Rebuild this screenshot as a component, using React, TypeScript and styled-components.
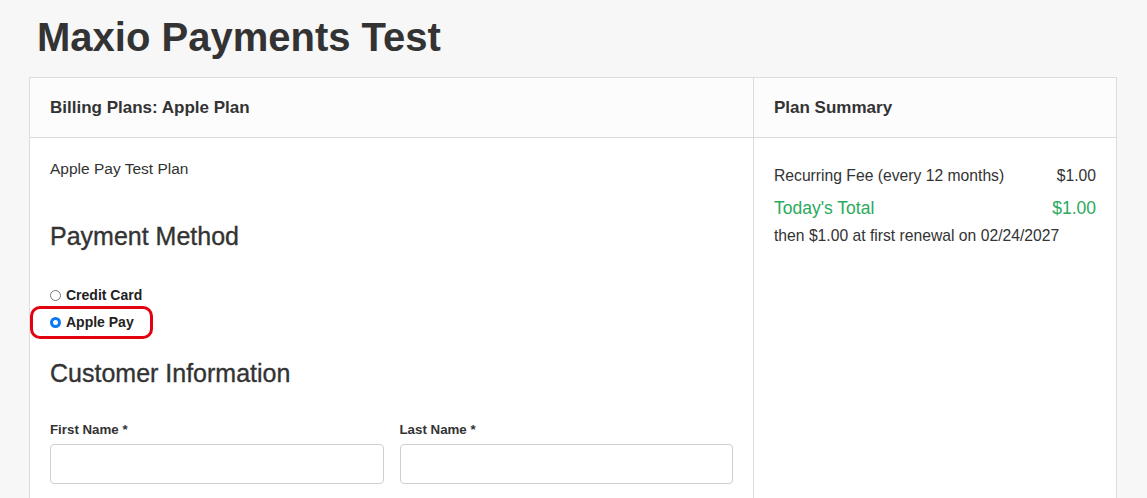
import styled, { createGlobalStyle } from "styled-components";

const GlobalStyle = createGlobalStyle`
  html, body {
    margin: 0;
    padding: 0;
    background: #f7f7f7;
    color: #333;
    font-family: "Liberation Sans", Arial, Helvetica, sans-serif;
  }
  * { box-sizing: border-box; }
`;

const Page = styled.div`
  padding: 15px 30px 0 29px;
`;

const Title = styled.h1`
  margin: 0 0 18px 8px;
  font-size: 40px;
  line-height: 44px;
  font-weight: 700;
  color: #333;
`;

const Card = styled.div`
  display: grid;
  grid-template-columns: 723px 1fr;
  border: 1px solid #dcdcdc;
  background: #fff;
`;

const Column = styled.section<{ $divider?: boolean }>`
  display: flex;
  flex-direction: column;
  border-left: ${(p) => (p.$divider ? "1px solid #dcdcdc" : "none")};
`;

const Header = styled.div`
  height: 60px;
  padding: 0 20px;
  line-height: 59px;
  font-size: 17px;
  font-weight: 700;
  background: #fcfcfc;
  border-bottom: 1px solid #dcdcdc;
`;

const Body = styled.div<{ $top: number }>`
  padding: ${(p) => p.$top}px 20px 20px;
`;

const PlanName = styled.div`
  font-size: 15.5px;
  line-height: 22px;
`;

const SectionTitle = styled.h2<{ $gap: number }>`
  margin: ${(p) => p.$gap}px 0 0;
  font-size: 25px;
  line-height: 30px;
  font-weight: 400;
  color: #333;
  -webkit-text-stroke: 0.35px #333;
`;

const RadioGroup = styled.div`
  margin-top: 30.5px;
  display: flex;
  flex-direction: column;
`;

const RadioRow = styled.label`
  position: relative;
  display: flex;
  align-items: center;
  gap: 5px;
  height: 27px;
  font-size: 14px;
  font-weight: 700;
  color: #222;
`;

const RadioDot = styled.span<{ $checked?: boolean }>`
  width: 11px;
  height: 11px;
  border-radius: 50%;
  flex-shrink: 0;
  background: #fff;
  border: ${(p) => (p.$checked ? "3.5px solid #0a78f5" : "1px solid #777")};
`;

const Highlight = styled.span`
  position: absolute;
  left: -20px;
  top: -3px;
  width: 123px;
  height: 33px;
  border: 3.5px solid #e3000f;
  border-radius: 10px;
  pointer-events: none;
`;

const FieldGrid = styled.div`
  margin-top: 34.5px;
  display: grid;
  grid-template-columns: 1fr 1fr;
  gap: 16px;
`;

const Field = styled.div`
  display: flex;
  flex-direction: column;
  gap: 5.5px;
`;

const Label = styled.label`
  font-size: 13.3px;
  line-height: 16px;
  font-weight: 700;
  color: #333;
`;

const Input = styled.input`
  height: 40px;
  width: 100%;
  border: 1px solid #cfcfcf;
  border-radius: 4px;
  background: #fff;
  font: inherit;
  padding: 0 10px;
  outline: none;
`;

const SummaryRow = styled.div<{ $green?: boolean; $gap?: number }>`
  display: flex;
  justify-content: space-between;
  margin-top: ${(p) => p.$gap ?? 0}px;
  font-size: ${(p) => (p.$green ? "17.5px" : "15.7px")};
  line-height: ${(p) => (p.$green ? "26px" : "22px")};
  color: ${(p) => (p.$green ? "#2ba95e" : "#333")};
`;

const Note = styled.div`
  margin-top: 4.4px;
  font-size: 15.7px;
  line-height: 22px;
  color: #333;
`;

export default function App() {
  return (
    <>
      <GlobalStyle />
      <Page>
        <Title>Maxio Payments Test</Title>
        <Card>
          <Column>
            <Header>Billing Plans: Apple Plan</Header>
            <Body $top={20}>
              <PlanName>Apple Pay Test Plan</PlanName>
              <SectionTitle $gap={41}>Payment Method</SectionTitle>
              <RadioGroup>
                <RadioRow>
                  <RadioDot />
                  Credit Card
                </RadioRow>
                <RadioRow>
                  <RadioDot $checked />
                  Apple Pay
                  <Highlight />
                </RadioRow>
              </RadioGroup>
              <SectionTitle $gap={22}>Customer Information</SectionTitle>
              <FieldGrid>
                <Field>
                  <Label>First Name *</Label>
                  <Input type="text" />
                </Field>
                <Field>
                  <Label>Last Name *</Label>
                  <Input type="text" />
                </Field>
              </FieldGrid>
            </Body>
          </Column>
          <Column $divider>
            <Header>Plan Summary</Header>
            <Body $top={26.6}>
              <SummaryRow>
                <span>Recurring Fee (every 12 months)</span>
                <span>$1.00</span>
              </SummaryRow>
              <SummaryRow $green $gap={8.3}>
                <span>Today's Total</span>
                <span>$1.00</span>
              </SummaryRow>
              <Note>then $1.00 at first renewal on 02/24/2027</Note>
            </Body>
          </Column>
        </Card>
      </Page>
    </>
  );
}
